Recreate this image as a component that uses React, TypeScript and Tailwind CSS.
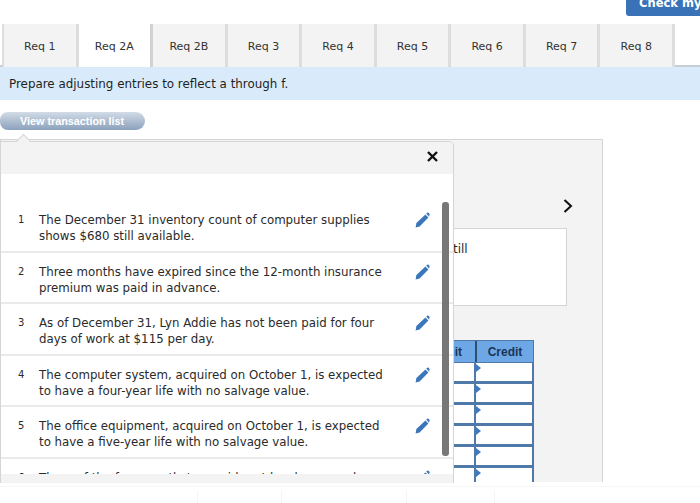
import React from "react";

const tabs = ["Req 1", "Req 2A", "Req 2B", "Req 3", "Req 4", "Req 5", "Req 6", "Req 7", "Req 8"];

const rows = [
  ["The December 31 inventory count of computer supplies", "shows $680 still available."],
  ["Three months have expired since the 12-month insurance", "premium was paid in advance."],
  ["As of December 31, Lyn Addie has not been paid for four", "days of work at $115 per day."],
  ["The computer system, acquired on October 1, is expected", "to have a four-year life with no salvage value."],
  ["The office equipment, acquired on October 1, is expected", "to have a five-year life with no salvage value."],
  ["Three of the four months' prepaid rent has been used up", "as of December 31."],
];

function Pencil() {
  return (
    <svg width="15" height="16" viewBox="0 0 15 16" className="shrink-0">
      <path d="M0.6 15.4 L1.4 11 L10.4 2.4 L13.4 5.4 L4.6 14.4 Z" fill="#3b76ba" />
      <path d="M11.2 1.6 L12.2 0.7 Q12.9 0.2 13.6 0.8 L14.4 1.7 Q15 2.4 14.4 3.1 L14.1 4.7 Z" fill="#3b76ba" />
    </svg>
  );
}

export default function App() {
  return (
    <div className="relative w-[700px] h-[503px] overflow-hidden bg-white font-['DejaVu_Sans',sans-serif] text-[#2a2a2a]">
      <div className="h-6 flex justify-end items-start">
        <div className="w-[74px] h-4 bg-[#3a72b8] rounded-bl-[3px] overflow-hidden flex items-end pl-[13px] pb-[7px] text-white text-[11.5px] font-semibold whitespace-nowrap leading-none">
          Check my work
        </div>
      </div>

      <div className="w-[671px] ml-[4px] h-[41px] grid grid-cols-9">
        {tabs.map((t, i) => (
          <div
            key={t}
            className={
              "flex items-center justify-center text-[11px] text-[#333] border-r-[3px] pt-1 " +
              (t === "Req 2A"
                ? "bg-white border-[#d2d2d2] h-[43px] relative z-10"
                : "bg-[#f3f3f3] border-[#dddddd]") +
              (i === 0 ? " border-l-2 -ml-[2px]" : "")
            }
          >
            {t}
          </div>
        ))}
      </div>

      <div className="h-[35px] bg-[#d9ebfa] border-t-2 border-[#c6cfd8] flex items-center pl-[9px] pt-[3px] text-[11.9px] text-[#1f1f1f]">
        Prepare adjusting entries to reflect a through f.
      </div>

      <div className="pt-3 h-[39px]">
        <div className="w-[145px] h-[18px] rounded-r-[9px] rounded-l-[8px] bg-gradient-to-b from-[#d3dce7] to-[#8ba1bc] pl-5 flex items-center text-white text-[10.8px] font-bold font-['Liberation_Sans',sans-serif]">
          View transaction list
        </div>
      </div>

      <div className="relative w-[603px] h-[343px] bg-[#f3f3f3] border border-[#d5d5d5] border-b-0 flex flex-col items-end pr-[35px]">
        <svg width="10" height="14" viewBox="0 0 10 14" className="mt-[59px] mr-[-6px] shrink-0">
          <path d="M1.5 1 L8 7 L1.5 13" fill="none" stroke="#111" strokeWidth="2" />
        </svg>
        <div className="mt-[15px] w-[401px] h-[78px] bg-white border border-[#d5d5d5] pl-[286px] pt-[12px] text-xs">
          till
        </div>

        <div className="mt-[34px] mr-[33px] w-[116px] flex-1 overflow-hidden">
          <div className="h-[23px] grid grid-cols-[58px_58px] bg-[#6ea7e6] border border-[#4f79a8] text-xs font-bold font-['Liberation_Sans',sans-serif] text-[#1b3556]">
            <div className="flex items-center justify-center border-r-2 border-[#2f4d73]">Debit</div>
            <div className="flex items-center justify-center pr-[2px]">Credit</div>
          </div>
          {[0, 1, 2, 3, 4, 5].map((i) => (
            <div key={i} className="h-[21px] grid grid-cols-[58px_58px] bg-white border-b-[3px] border-[#4f79a8]">
              <div className="relative border-r-[2px] border-[#4f79a8]">
                <div className="absolute right-[-7px] top-[1px] w-0 h-0 border-y-[4px] border-y-transparent border-l-[5px] border-l-[#3f78bd]" />
              </div>
              <div className="border-r-2 border-[#4f79a8]" />
            </div>
          ))}
        </div>

        <div className="absolute left-[-1px] top-[1px] w-[454px] h-[342px] bg-white border border-[#d5d5d5] border-b-0 rounded-tr-[5px] flex flex-col overflow-hidden">
          <div className="h-[32px] shrink-0 bg-[#f3f3f3] flex justify-end items-center pr-[15px] pb-[4px]">
            <svg width="11" height="11" viewBox="0 0 11 11">
              <path d="M1 1 L10 10 M10 1 L1 10" stroke="#111" strokeWidth="2.4" />
            </svg>
          </div>
          <div className="relative h-[300px] shrink-0 overflow-hidden pt-[27px]">
            {rows.map((r, i) => (
              <div
                key={i}
                className="h-[51.5px] flex pl-[17px] pr-[23px] pt-[11px] text-[11.8px] leading-4 border-b-2 border-[#eaeaea]"
              >
                <div className="w-[21px] shrink-0 text-[10px]">{i + 1}</div>
                <div className="flex-1 whitespace-nowrap">
                  {r[0]}
                  <br />
                  {r[1]}
                </div>
                <div className="shrink-0">
                  <Pencil />
                </div>
              </div>
            ))}
            <div className="absolute left-[441px] top-[28px] w-[7px] h-[254px] rounded-[3px] bg-[#777]" />
          </div>
          <div className="flex-1 bg-[#f3f3f3]" />
        </div>
        <div className="absolute left-[17px] top-[-4px] w-[11px] h-[11px] rotate-45 bg-[#f3f3f3] border-l border-t border-[#d5d5d5]" />
      </div>

      <div className="mt-[4px] border-t border-[#f7f7f7] h-[17px] grid grid-cols-[198px_84px_125px_88px_1fr] pt-[3px]">
        <div className="border-r border-[#f5f5f5]" />
        <div className="border-r border-[#f5f5f5]" />
        <div className="border-r border-[#f5f5f5]" />
        <div className="border-r border-[#f5f5f5]" />
        <div />
      </div>
    </div>
  );
}
